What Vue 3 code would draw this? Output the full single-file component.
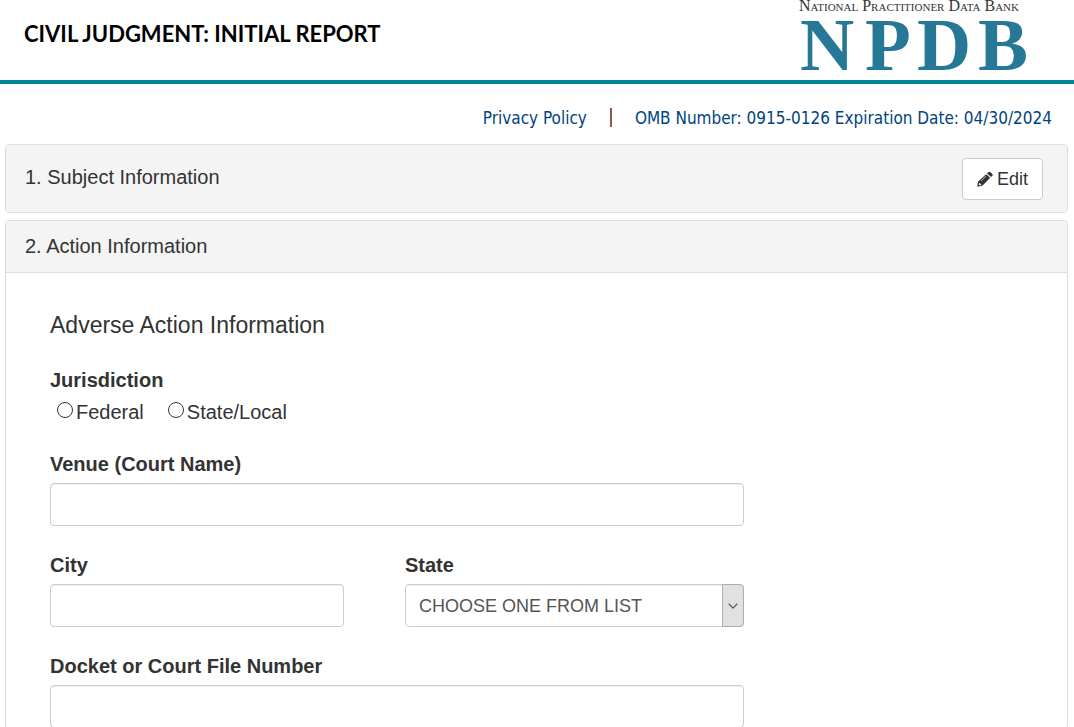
<script setup>
import { ref } from 'vue'

const jurisdiction = ref('')
const venue = ref('')
const city = ref('')
const state = ref('')
const docket = ref('')
</script>

<template>
  <div class="page">
    <header class="masthead">
      <h1>CIVIL JUDGMENT: INITIAL REPORT</h1>
      <svg class="logo" viewBox="0 0 230 80" role="img" aria-label="National Practitioner Data Bank">
        <text class="logo-name" x="2" y="11">National Practitioner Data Bank</text>
        <text class="logo-letters" x="3 68 120 181" y="70">NPDB</text>
      </svg>
    </header>

    <nav class="meta">
      <a href="#privacy">Privacy Policy</a>
      <span class="divider"></span>
      <a href="#omb">OMB Number: 0915-0126 Expiration Date: 04/30/2024</a>
    </nav>

    <main>
      <section class="panel">
        <div class="panel-head with-action">
          <h2>1. Subject Information</h2>
          <button type="button" class="edit">
            <svg viewBox="0 0 16 16" aria-hidden="true">
              <path fill-rule="evenodd" d="M11 1.4 Q12.2 .2 13.4 1.2 L15.2 2.8 Q16.2 3.8 15.2 5 L14 6.1 L9.9 2.5 Z M9.1 3.2 L13.2 6.8 L5.6 14.4 L.3 15.7 L1 10.8 Z M2.3 11.9 L1.8 13.5 L2.6 14.3 L4.3 13.8 L4 12.9 L3.2 12.8 L3.1 12 Z M8.7 4.9 L3.7 9.9 L4.1 10.3 L9.1 5.3 Z" />
            </svg>
            Edit
          </button>
        </div>
      </section>

      <section class="panel">
        <div class="panel-head titled">
          <h2>2. Action Information</h2>
        </div>
        <form class="panel-body" @submit.prevent>
          <h3>Adverse Action Information</h3>

          <fieldset>
            <legend>Jurisdiction</legend>
            <div class="choices">
              <label><input v-model="jurisdiction" type="radio" name="jurisdiction" value="federal">Federal</label>
              <label><input v-model="jurisdiction" type="radio" name="jurisdiction" value="state">State/Local</label>
            </div>
          </fieldset>

          <div class="field">
            <label for="venue">Venue (Court Name)</label>
            <input id="venue" v-model="venue" type="text">
          </div>

          <div class="row">
            <div class="field">
              <label for="city">City</label>
              <input id="city" v-model="city" type="text">
            </div>
            <div class="field">
              <label for="state">State</label>
              <div class="select">
                <select id="state" v-model="state">
                  <option value="">CHOOSE ONE FROM LIST</option>
                </select>
                <span class="arrow">
                  <svg viewBox="0 0 10 6" aria-hidden="true"><path d="M.7 .7 L5 5 L9.3 .7" /></svg>
                </span>
              </div>
            </div>
          </div>

          <div class="field">
            <label for="docket">Docket or Court File Number</label>
            <input id="docket" v-model="docket" type="text">
          </div>
        </form>
      </section>
    </main>
  </div>
</template>

<style>
body {
  margin: 0;
  background: #fff;
}
</style>

<style scoped>
.page {
  font-family: "Liberation Sans", Arial, sans-serif;
  font-size: 20px;
  line-height: 28px;
  color: #333;
}

.page * {
  box-sizing: border-box;
}

.masthead {
  display: flex;
  justify-content: space-between;
  align-items: flex-start;
  padding: 0 47px 0 24px;
  border-bottom: 4px solid #008793;
}

h1,
h2,
h3 {
  margin: 0;
  font-weight: 400;
}

h1 {
  padding-top: 20px;
  font-family: Lato, "Trebuchet MS", sans-serif;
  font-size: 22px;
  font-weight: 700;
  line-height: 28px;
  color: #000;
}

.logo {
  flex: none;
  width: 230px;
  height: 80px;
  overflow: visible;
}

.logo-name {
  font: small-caps 16px "Liberation Serif", serif;
  fill: #333;
}

.logo-letters {
  font: bold 75px "Liberation Serif", serif;
  fill: #277896;
}

.meta {
  display: flex;
  justify-content: flex-end;
  align-items: center;
  gap: 23px;
  height: 60px;
  padding: 7px 22px 0 0;
  font-family: "DejaVu Sans Condensed", Tahoma, sans-serif;
  font-size: 17px;
}

.meta a {
  color: #00437f;
  text-decoration: none;
}

.divider {
  width: 2px;
  height: 19px;
  background: #8a5a4a;
}

main {
  display: grid;
  gap: 7px;
  padding: 0 6px 0 5px;
}

.panel {
  border: 1px solid #ddd;
  border-radius: 4px;
}

.panel-head {
  padding: 11px 24px 12px 19px;
  background: #f4f4f4;
  border-radius: 3px;
}

.panel-head h2 {
  font-size: 20px;
}

.titled {
  border-bottom: 1px solid #ddd;
  border-radius: 3px 3px 0 0;
}

.with-action {
  display: flex;
  justify-content: space-between;
  padding-top: 13px;
}

.with-action h2 {
  padding-top: 5px;
}

.edit {
  display: flex;
  align-items: center;
  gap: 4px;
  height: 42px;
  padding: 0 14px;
  border: 1px solid #ccc;
  border-radius: 4px;
  background: #fff;
  color: #333;
  font: 18px "Liberation Sans", Arial, sans-serif;
}

.edit svg {
  width: 16px;
  height: 16px;
  fill: #333;
}

.panel-body {
  max-width: 782px;
  padding: 38px 44px 0;
}

h3 {
  font-size: 23px;
}

fieldset {
  margin: 27px 0 24px;
  padding: 0;
  border: 0;
}

legend,
.field > label {
  display: block;
  padding: 0;
  font-weight: 700;
}

.choices {
  display: flex;
  gap: 24px;
  padding: 4px 0 0 7px;
}

.choices label {
  display: flex;
  align-items: center;
  gap: 3px;
}

.choices input {
  appearance: none;
  width: 16px;
  height: 16px;
  margin: 0 0 4px;
  border: 1px solid #333;
  border-radius: 50%;
  background: #fff;
}

.choices input:checked {
  box-shadow: inset 0 0 0 3px #fff;
  background: #333;
}

.field {
  margin-bottom: 25px;
}

.field:last-child {
  margin-bottom: 0;
}

.field input,
select {
  display: block;
  width: 100%;
  height: 43px;
  margin-top: 5px;
  padding: 0 13px;
  border: 1px solid #ccc;
  border-radius: 4px;
  background: #fff;
  box-shadow: inset 0 1px 1px rgba(0, 0, 0, 0.07);
  color: #555;
  font: 18px "Liberation Sans", Arial, sans-serif;
}

.row {
  display: grid;
  grid-template-columns: 294fr 339fr;
  gap: 61px;
  margin-bottom: 25px;
}

.row .field {
  margin-bottom: 0;
}

.select {
  position: relative;
}

select {
  appearance: none;
}

.arrow {
  position: absolute;
  top: 0;
  right: 0;
  bottom: 0;
  display: grid;
  place-items: center;
  width: 22px;
  border: 1px solid #adadad;
  border-radius: 0 4px 4px 0;
  background: #e1e1e1;
  pointer-events: none;
}

.arrow svg {
  width: 10px;
  height: 6px;
  fill: none;
  stroke: #606060;
  stroke-width: 1.3;
}
</style>
